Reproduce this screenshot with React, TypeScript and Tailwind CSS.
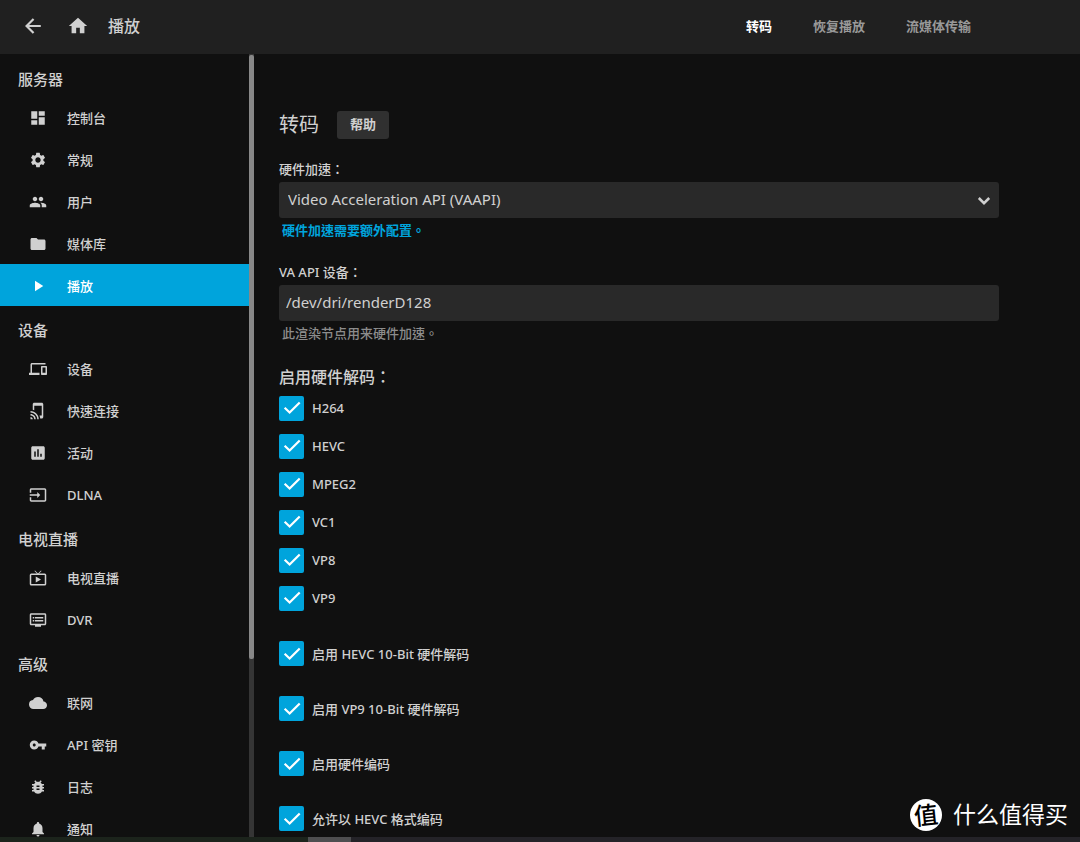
import type { IconType } from "react-icons";
import {
  MdAssessment,
  MdBugReport,
  MdCloud,
  MdDashboard,
  MdDevices,
  MdDvr,
  MdFolder,
  MdHome,
  MdInput,
  MdLiveTv,
  MdNotifications,
  MdPeople,
  MdPlayArrow,
  MdSettings,
  MdTapAndPlay,
  MdVpnKey,
} from "react-icons/md";

type NavItem = { label: string; icon: IconType; active?: boolean };

const sections: { title: string; items: NavItem[] }[] = [
  {
    title: "服务器",
    items: [
      { label: "控制台", icon: MdDashboard },
      { label: "常规", icon: MdSettings },
      { label: "用户", icon: MdPeople },
      { label: "媒体库", icon: MdFolder },
      { label: "播放", icon: MdPlayArrow, active: true },
    ],
  },
  {
    title: "设备",
    items: [
      { label: "设备", icon: MdDevices },
      { label: "快速连接", icon: MdTapAndPlay },
      { label: "活动", icon: MdAssessment },
      { label: "DLNA", icon: MdInput },
    ],
  },
  {
    title: "电视直播",
    items: [
      { label: "电视直播", icon: MdLiveTv },
      { label: "DVR", icon: MdDvr },
    ],
  },
  {
    title: "高级",
    items: [
      { label: "联网", icon: MdCloud },
      { label: "API 密钥", icon: MdVpnKey },
      { label: "日志", icon: MdBugReport },
      { label: "通知", icon: MdNotifications },
    ],
  },
];

const codecs = ["H264", "HEVC", "MPEG2", "VC1", "VP8", "VP9"];

const options = [
  "启用 HEVC 10-Bit 硬件解码",
  "启用 VP9 10-Bit 硬件解码",
  "启用硬件编码",
  "允许以 HEVC 格式编码",
];

function Header() {
  return (
    <header className="flex h-[54px] shrink-0 items-center justify-between bg-[#202020] pr-[109px] pl-[22px]">
      <div className="flex items-center pb-[2px]">
        <button type="button" aria-label="返回">
          <svg viewBox="0 0 24 24" className="size-[22px] fill-none stroke-current stroke-[2.4]">
            <path d="M20.5 12H5.5M12.6 4.4 5 12l7.6 7.6" />
          </svg>
        </button>
        <a href="#home" aria-label="主页" className="ml-[23px]">
          <MdHome size={22} />
        </a>
        <h1 className="ml-[19px] text-[16px] font-medium">播放</h1>
      </div>
      <nav className="flex gap-[41px] text-[13px] font-bold text-[#999]">
        <a href="#transcoding" className="text-white">
          转码
        </a>
        <a href="#resume">恢复播放</a>
        <a href="#streaming">流媒体传输</a>
      </nav>
    </header>
  );
}

function Sidebar() {
  return (
    <aside className="flex w-[254px] shrink-0 overflow-hidden">
      <nav className="flex-1 pt-px">
        {sections.map((section) => (
          <div key={section.title}>
            <h3 className="h-[41px] pt-3 pl-[18px] text-[15px] leading-6 font-medium">
              {section.title}
            </h3>
            {section.items.map(({ label, icon: Icon, active }) => (
              <a
                key={label}
                href="#"
                className={`flex h-[42px] items-center gap-5 pt-px pl-[29px] text-[13px] font-medium ${
                  active ? "bg-[#00a4dc] text-white" : ""
                }`}
              >
                <Icon size={18} className="shrink-0" />
                <span className="pt-px leading-4">{label}</span>
              </a>
            ))}
          </div>
        ))}
      </nav>
      <div className="w-[5px] bg-[#353535] pt-px">
        <div className="h-[604px] rounded-[2px] bg-[#888]" />
      </div>
    </aside>
  );
}

function CheckRow({ label, className }: { label: string; className: string }) {
  return (
    <label className={`flex items-center gap-2 text-[13px] font-medium ${className}`}>
      <span className="grid size-[25px] place-items-center">
        <input
          type="checkbox"
          defaultChecked
          className="peer col-start-1 row-start-1 size-full appearance-none rounded-[2px] border-2 border-[#999] checked:border-[#00a4dc] checked:bg-[#00a4dc]"
        />
        <svg
          viewBox="0 0 24 24"
          className="pointer-events-none col-start-1 row-start-1 hidden size-[22px] fill-none stroke-white stroke-[2.4] peer-checked:block"
        >
          <path d="M4 11.8 9.4 17 20.4 6" />
        </svg>
      </span>
      <span className="pt-[2px]">{label}</span>
    </label>
  );
}

function Transcoding() {
  return (
    <main className="flex-1 overflow-hidden pt-[57px] pr-[81px] pl-[25px]">
      <div className="flex items-center gap-[18px]">
        <h2 className="text-[20px] leading-7 font-normal">转码</h2>
        <button
          type="button"
          className="h-7 rounded-[3px] bg-[#303030] px-[13px] text-[13px] font-bold"
        >
          帮助
        </button>
      </div>

      <div className="mt-5 flex flex-col gap-5">
        <div>
          <label htmlFor="hwaccel" className="block pb-[2px] text-[13px] leading-[21px] font-medium">
            硬件加速：
          </label>
          <div className="relative">
            <select
              id="hwaccel"
              className="h-9 w-full appearance-none rounded-[3px] bg-[#292929] pr-9 pb-[2px] pl-[9px] text-[15px]"
            >
              <option>Video Acceleration API (VAAPI)</option>
            </select>
            <svg
              viewBox="0 0 24 24"
              className="pointer-events-none absolute top-[7px] right-[3px] size-6 fill-none stroke-current stroke-[2.5]"
            >
              <path d="M6.8 9 12 14.2 17.2 9" />
            </svg>
          </div>
          <a
            href="#docs"
            className="block pl-[3px] text-[13px] leading-6 font-bold text-[#00a4dc]"
          >
            硬件加速需要额外配置。
          </a>
        </div>

        <div>
          <label htmlFor="device" className="block pb-[2px] text-[13px] leading-[21px] font-medium">
            VA API 设备：
          </label>
          <input
            id="device"
            type="text"
            defaultValue="/dev/dri/renderD128"
            className="h-9 w-full rounded-[3px] bg-[#292929] px-[7px] pb-[2px] text-[15px]"
          />
          <p className="pl-[3px] text-[13px] leading-6 font-medium text-[#8c8c8c]">
            此渲染节点用来硬件加速。
          </p>
        </div>

        <div>
          <h3 className="text-[16px] leading-6 font-medium">启用硬件解码：</h3>
          {codecs.map((codec) => (
            <CheckRow key={codec} label={codec} className="h-[38px]" />
          ))}
          <div className="mt-[9px]">
            {options.map((option) => (
              <CheckRow key={option} label={option} className="h-[55px]" />
            ))}
          </div>
        </div>
      </div>
    </main>
  );
}

export default function App() {
  return (
    <div className="relative flex h-screen flex-col overflow-hidden bg-[#101010] font-['Noto_Sans','Noto_Sans_CJK_TC',sans-serif] text-[#d0d0d0]">
      <Header />
      <div className="flex min-h-0 flex-1">
        <Sidebar />
        <Transcoding />
      </div>
      <div className="flex h-[5px] shrink-0 bg-[#242328]">
        <div className="w-[308px] bg-[#1c241c]" />
        <div className="w-[43px] bg-[#4e4e50]" />
      </div>

      <div className="absolute right-3 bottom-[9px] flex items-center gap-[11px] font-['Noto_Sans_CJK_SC',sans-serif] text-white">
        <span className="flex size-8 items-center justify-center rounded-full bg-white text-black">
          <span className="-rotate-6 pb-[2px] text-[24px] leading-7 font-medium">值</span>
        </span>
        <span className="pb-1 text-[23px] leading-8">什么值得买</span>
      </div>
    </div>
  );
}
